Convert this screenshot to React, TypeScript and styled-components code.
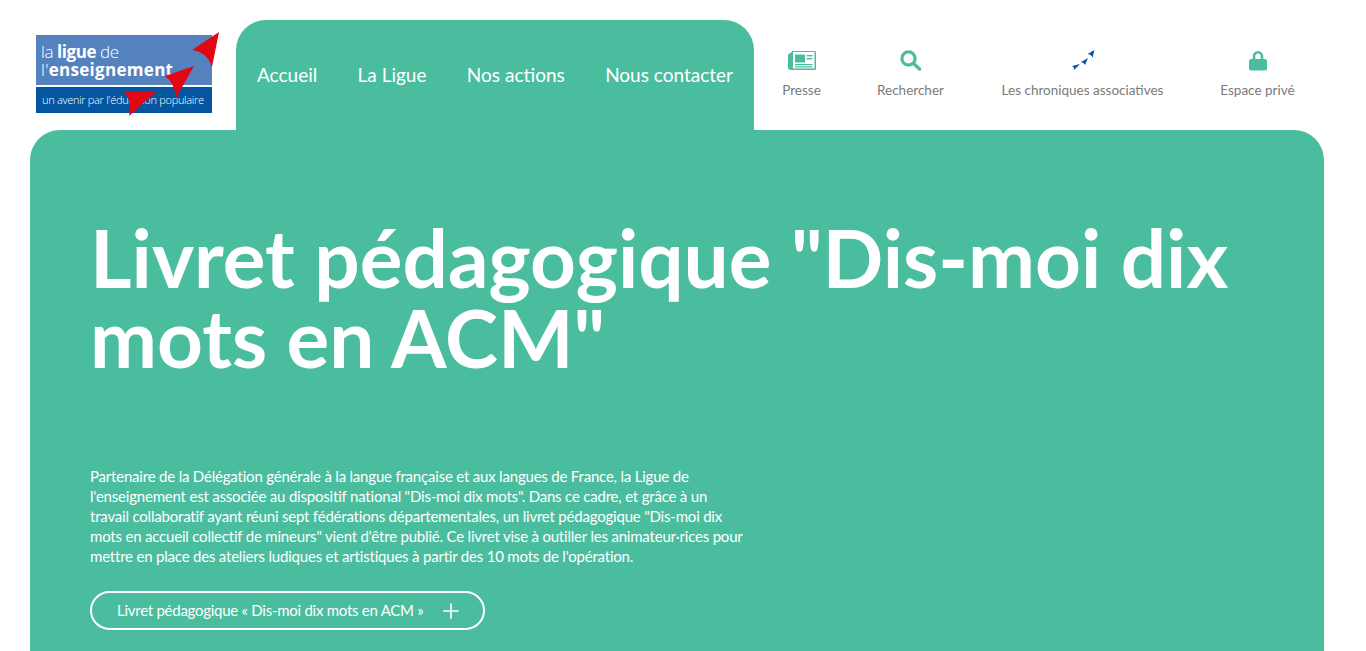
import React, { FC, ReactNode } from 'react';
import styled, { createGlobalStyle } from 'styled-components';
import { Plus } from 'lucide-react';

const GREEN = '#4bbd9f';
const BLUE = '#0456a0';

const GlobalStyle = createGlobalStyle`
  html, body {
    margin: 0;
    height: 651px;
    overflow: hidden;
    background: #fff;
    font-family: 'Lato', 'Liberation Sans', sans-serif;
  }
`;

const Logo: FC = () => (
  <LogoSvg width="190" height="90" viewBox="0 0 190 90">
    <rect x="0" y="5" width="176" height="50" fill="#5482bf" />
    <rect x="0" y="57" width="176" height="26" fill={BLUE} />
    <text x="5" y="28" fontSize="17" fill="#fff" fontFamily="'Open Sans', sans-serif" fontWeight="300" textLength="78">
      la <tspan fontWeight="700">ligue</tspan> de
    </text>
    <text x="5" y="46" fontSize="17" fill="#fff" fontFamily="'Open Sans', sans-serif" fontWeight="300" textLength="132">
      l'<tspan fontWeight="700">enseignement</tspan>
    </text>
    <text x="6" y="74" fontSize="11" fill="#fff" fontFamily="'Open Sans', sans-serif" fontWeight="300" textLength="162">
      un avenir par l'éducation populaire
    </text>
    <path d="M183 2 L156 20 Q171 22 176 37 Z" fill="#e30613" />
    <path d="M158 36 L129 46 Q138 52 140 68 Z" fill="#e30613" />
    <path d="M121 61 L87 61 Q96 68 93 86 Z" fill="#e30613" />
  </LogoSvg>
);

const PressIcon: FC = () => (
  <svg width="28" height="21" viewBox="0 0 28 21">
    <path d="M3 2 H27 a1 1 0 0 1 1 1 V19 a1 1 0 0 1 -1 1 H3 a3 3 0 0 1 -3 -3 V6 a3 3 0 0 1 3 -3 Z" fill={GREEN} />
    <rect x="4.5" y="1.5" width="22.5" height="17.5" fill="#fff" stroke={GREEN} strokeWidth="1" />
    <rect x="7" y="4.5" width="10" height="8" fill={GREEN} />
    <rect x="18.5" y="5" width="6" height="1.4" fill={GREEN} />
    <rect x="18.5" y="8" width="6" height="1.4" fill={GREEN} />
    <rect x="7" y="14" width="17.5" height="1.2" fill={GREEN} />
    <rect x="7" y="16.3" width="17.5" height="1.2" fill={GREEN} />
  </svg>
);

const SearchIcon: FC = () => (
  <svg width="22" height="21" viewBox="0 0 22 21">
    <circle cx="8.5" cy="8.5" r="6.6" fill="none" stroke={GREEN} strokeWidth="3.2" />
    <path d="M13.5 13.5 L19.5 19" stroke={GREEN} strokeWidth="3.4" strokeLinecap="round" />
  </svg>
);

const ArrowsIcon: FC = () => (
  <svg width="24" height="22" viewBox="0 0 24 22">
    <path d="M23.3 1 L16.7 5 Q20.5 5.5 21.7 8.7 Z" fill={BLUE} />
    <path d="M17 9 L10 13 Q13 13.5 14 16 Z" fill={BLUE} />
    <path d="M9 15 L1 17 Q3.5 18 3 21 Z" fill={BLUE} />
  </svg>
);

const LockIcon: FC = () => (
  <svg width="18" height="21" viewBox="0 0 18 21">
    <path d="M5 10 V6.3 a4 4 0 0 1 8 0 V10" fill="none" stroke={GREEN} strokeWidth="2.6" />
    <rect x="0" y="9" width="18" height="11.5" rx="2" fill={GREEN} />
  </svg>
);

const tools: { label: string; width: number; icon: ReactNode }[] = [
  { label: 'Presse', width: 95, icon: <PressIcon /> },
  { label: 'Rechercher', width: 123, icon: <SearchIcon /> },
  { label: 'Les chroniques associatives', width: 221, icon: <ArrowsIcon /> },
  { label: 'Espace privé', width: 129, icon: <LockIcon /> },
];

const App: FC = () => (
  <>
    <GlobalStyle />
    <Page>
      <Header>
        <Logo />
        <MainNav>
          <NavLink>Accueil</NavLink>
          <NavLink>La Ligue</NavLink>
          <NavLink>Nos actions</NavLink>
          <NavLink>Nous contacter</NavLink>
        </MainNav>
        <Tools>
          {tools.map((t) => (
            <Tool key={t.label} $width={t.width}>
              <ToolIcon>{t.icon}</ToolIcon>
              <ToolLabel>{t.label}</ToolLabel>
            </Tool>
          ))}
        </Tools>
      </Header>
      <Main>
        <Title>Livret pédagogique "Dis-moi dix mots en ACM"</Title>
        <Intro>
          Partenaire de la Délégation générale à la langue française et aux langues de France, la Ligue de
          <br />
          l'enseignement est associée au dispositif national "Dis-moi dix mots". Dans ce cadre, et grâce à un
          <br />
          travail collaboratif ayant réuni sept fédérations départementales, un livret pédagogique "Dis-moi dix
          <br />
          mots en accueil collectif de mineurs" vient d'être publié. Ce livret vise à outiller les animateur·rices pour
          <br />
          mettre en place des ateliers ludiques et artistiques à partir des 10 mots de l'opération.
        </Intro>
        <DownloadButton>
          <span>Livret pédagogique « Dis-moi dix mots en ACM »</span>
          <Plus size={24} strokeWidth={1.7} />
        </DownloadButton>
      </Main>
    </Page>
  </>
);

export default App;

const Page = styled.div`
  height: 651px;
  padding: 0 42px 0 30px;
  box-sizing: border-box;
  display: flex;
  flex-direction: column;
  overflow: hidden;
`;

const Header = styled.header`
  height: 130px;
  flex: none;
  display: flex;
  align-items: flex-end;
`;

const LogoSvg = styled.svg`
  flex: none;
  margin: 0 10px 10px 6px;
  display: block;
`;

const MainNav = styled.nav`
  width: 518px;
  height: 110px;
  box-sizing: border-box;
  padding: 0 21px;
  background: ${GREEN};
  border-radius: 30px 30px 0 0;
  display: flex;
  justify-content: space-between;
  align-items: center;
`;

const NavLink = styled.a`
  color: #fff;
  font-size: 19px;
  line-height: 24px;
  margin-top: -1px;
  white-space: nowrap;
`;

const Tools = styled.div`
  align-self: stretch;
  display: flex;
`;

const Tool = styled.a<{ $width: number }>`
  width: ${(p) => p.$width}px;
  display: flex;
  flex-direction: column;
  align-items: center;
  padding-top: 49px;
`;

const ToolIcon = styled.span`
  height: 22px;
  display: flex;
  align-items: center;
  justify-content: center;
`;

const ToolLabel = styled.span`
  margin-top: 10px;
  color: #7a7a7a;
  font-size: 13.5px;
  line-height: 18px;
  white-space: nowrap;
`;

const Main = styled.main`
  flex: 1;
  background: ${GREEN};
  border-radius: 30px 30px 0 0;
  padding: 87px 60px 0;
  color: #fff;
`;

const Title = styled.h1`
  margin: 0;
  font-size: 80px;
  line-height: 80px;
  font-weight: 700;
`;

const Intro = styled.p`
  margin: 89px 0 0;
  font-size: 15px;
  line-height: 20px;
  letter-spacing: -0.2px;
  white-space: nowrap;
`;

const DownloadButton = styled.a`
  width: 395px;
  height: 39px;
  margin-top: 25px;
  box-sizing: border-box;
  padding: 0 20px 2px 25px;
  border: 2px solid #fff;
  border-radius: 20px;
  display: flex;
  align-items: center;
  justify-content: space-between;
  font-size: 15px;
  letter-spacing: -0.26px;
  white-space: nowrap;

  svg {
    margin-top: 2px;
  }
`;
